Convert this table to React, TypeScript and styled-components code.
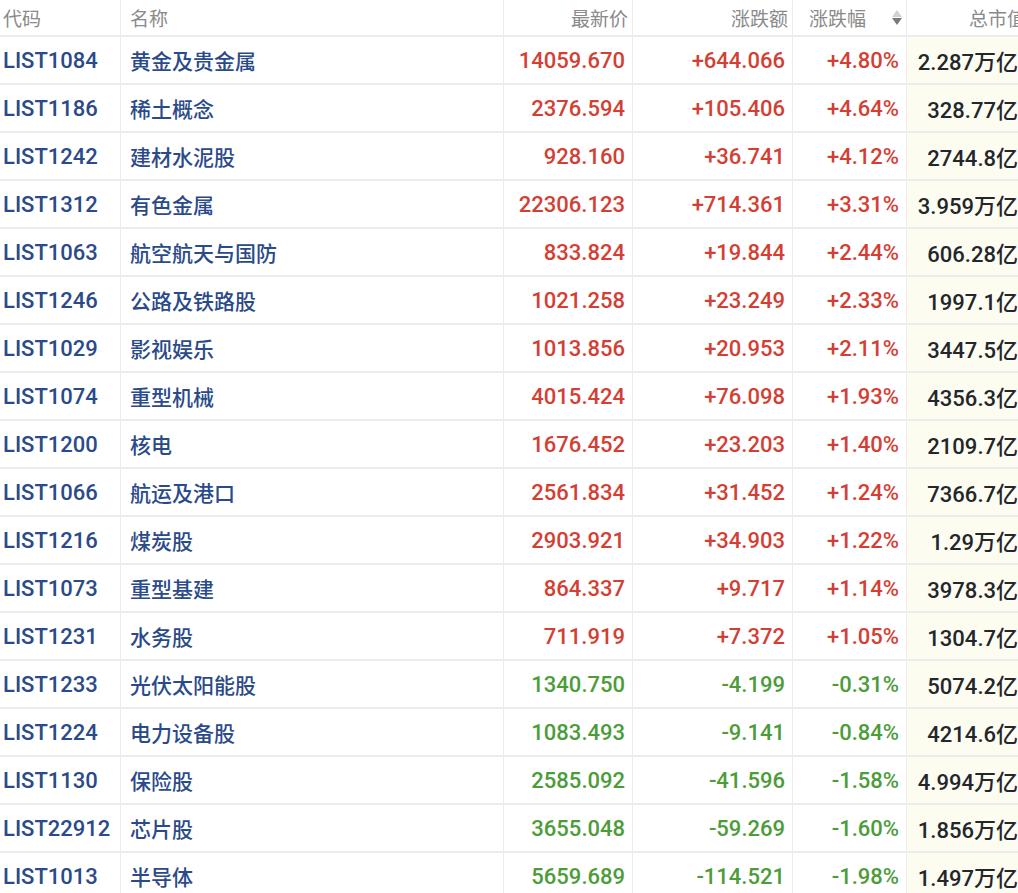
import * as React from 'react';
import styled, { createGlobalStyle } from 'styled-components';

const GlobalStyle = createGlobalStyle`
  html, body {
    margin: 0;
    padding: 0;
    background: #ffffff;
  }
  body {
    font-family: Roboto, 'Noto Sans CJK SC', sans-serif;
    overflow: hidden;
  }
`;

const COLS = '121px 383px 129px 160px 114px 124px';

const Table = styled.div`
  width: 1031px;
  height: 893px;
  overflow: hidden;
`;

const HeaderRow = styled.div`
  display: grid;
  grid-template-columns: ${COLS};
  height: 37px;
  border-bottom: 2px solid #ececec;
  box-sizing: border-box;
`;

const HeadCell = styled.div<{ $align?: 'left' | 'right' }>`
  display: flex;
  align-items: center;
  justify-content: ${(p) => (p.$align === 'right' ? 'flex-end' : 'flex-start')};
  padding: 0 ${(p) => (p.$align === 'right' ? '4px' : '0')} 0 ${(p) => (p.$align === 'right' ? '0' : '3px')};
  border-right: 1px solid #ececec;
  font-family: 'Noto Sans CJK SC', sans-serif;
  font-size: 19px;
  color: #8a8a8a;
  white-space: nowrap;
`;

const NameHead = styled(HeadCell)`
  padding-left: 9px;
`;

const SortHead = styled(HeadCell)`
  padding-left: 16px;
  justify-content: space-between;
  padding-right: 4px;
`;

const CapHead = styled(HeadCell)`
  justify-content: flex-end;
  padding-right: 5px;
  border-right: none;
`;

const Arrows = styled.span`
  display: flex;
  flex-direction: column;
  gap: 1px;
`;

const Tri = styled.span<{ $up?: boolean }>`
  display: block;
  width: 0;
  height: 0;
  border-left: 5px solid transparent;
  border-right: 5px solid transparent;
  ${(p) =>
    p.$up
      ? 'border-bottom: 7px solid #d2d2d2;'
      : 'border-top: 7px solid #7a7a7a;'}
`;

const Row = styled.div`
  display: grid;
  grid-template-columns: ${COLS};
  height: 48px;
  border-bottom: 2px solid #ececec;
  box-sizing: border-box;
`;

const Cell = styled.div<{ $tone?: 'up' | 'down' | 'code' }>`
  display: flex;
  align-items: center;
  justify-content: flex-end;
  padding-right: 7px;
  border-right: 1px solid #ececec;
  font-size: 22px;
  font-weight: 500;
  white-space: nowrap;
  color: ${(p) =>
    p.$tone === 'up' ? '#d33f34' : p.$tone === 'down' ? '#4c9c3a' : '#2a4a8a'};
`;

const CodeCell = styled(Cell)`
  justify-content: flex-start;
  padding: 0 0 0 3px;
`;

const NameCell = styled(Cell)`
  justify-content: flex-start;
  padding: 0 0 0 9px;
  font-family: 'Noto Sans CJK SC', sans-serif;
  font-size: 21px;
  font-weight: 500;
`;

const CapCell = styled(Cell)`
  background: #fcfcf1;
  color: #23262b;
  border-right: none;
  padding-right: 13px;
`;

type Item = {
  code: string;
  name: string;
  price: string;
  chg: string;
  pct: string;
  cap: string;
};

const rows: Item[] = [
  { code: 'LIST1084', name: '黄金及贵金属', price: '14059.670', chg: '+644.066', pct: '+4.80%', cap: '2.287万亿' },
  { code: 'LIST1186', name: '稀土概念', price: '2376.594', chg: '+105.406', pct: '+4.64%', cap: '328.77亿' },
  { code: 'LIST1242', name: '建材水泥股', price: '928.160', chg: '+36.741', pct: '+4.12%', cap: '2744.8亿' },
  { code: 'LIST1312', name: '有色金属', price: '22306.123', chg: '+714.361', pct: '+3.31%', cap: '3.959万亿' },
  { code: 'LIST1063', name: '航空航天与国防', price: '833.824', chg: '+19.844', pct: '+2.44%', cap: '606.28亿' },
  { code: 'LIST1246', name: '公路及铁路股', price: '1021.258', chg: '+23.249', pct: '+2.33%', cap: '1997.1亿' },
  { code: 'LIST1029', name: '影视娱乐', price: '1013.856', chg: '+20.953', pct: '+2.11%', cap: '3447.5亿' },
  { code: 'LIST1074', name: '重型机械', price: '4015.424', chg: '+76.098', pct: '+1.93%', cap: '4356.3亿' },
  { code: 'LIST1200', name: '核电', price: '1676.452', chg: '+23.203', pct: '+1.40%', cap: '2109.7亿' },
  { code: 'LIST1066', name: '航运及港口', price: '2561.834', chg: '+31.452', pct: '+1.24%', cap: '7366.7亿' },
  { code: 'LIST1216', name: '煤炭股', price: '2903.921', chg: '+34.903', pct: '+1.22%', cap: '1.29万亿' },
  { code: 'LIST1073', name: '重型基建', price: '864.337', chg: '+9.717', pct: '+1.14%', cap: '3978.3亿' },
  { code: 'LIST1231', name: '水务股', price: '711.919', chg: '+7.372', pct: '+1.05%', cap: '1304.7亿' },
  { code: 'LIST1233', name: '光伏太阳能股', price: '1340.750', chg: '-4.199', pct: '-0.31%', cap: '5074.2亿' },
  { code: 'LIST1224', name: '电力设备股', price: '1083.493', chg: '-9.141', pct: '-0.84%', cap: '4214.6亿' },
  { code: 'LIST1130', name: '保险股', price: '2585.092', chg: '-41.596', pct: '-1.58%', cap: '4.994万亿' },
  { code: 'LIST22912', name: '芯片股', price: '3655.048', chg: '-59.269', pct: '-1.60%', cap: '1.856万亿' },
  { code: 'LIST1013', name: '半导体', price: '5659.689', chg: '-114.521', pct: '-1.98%', cap: '1.497万亿' },
];

const App = () => {
  return (
    <>
      <GlobalStyle />
      <Table>
        <HeaderRow>
          <HeadCell>代码</HeadCell>
          <NameHead>名称</NameHead>
          <HeadCell $align="right">最新价</HeadCell>
          <HeadCell $align="right">涨跌额</HeadCell>
          <SortHead>
            涨跌幅
            <Arrows>
              <Tri $up />
              <Tri />
            </Arrows>
          </SortHead>
          <CapHead>总市值</CapHead>
        </HeaderRow>
        {rows.map((r) => {
          const tone = r.chg.startsWith('-') ? 'down' : 'up';
          return (
            <Row key={r.code}>
              <CodeCell $tone="code">{r.code}</CodeCell>
              <NameCell $tone="code">{r.name}</NameCell>
              <Cell $tone={tone}>{r.price}</Cell>
              <Cell $tone={tone}>{r.chg}</Cell>
              <Cell $tone={tone}>{r.pct}</Cell>
              <CapCell>{r.cap}</CapCell>
            </Row>
          );
        })}
      </Table>
    </>
  );
};

export default App;
